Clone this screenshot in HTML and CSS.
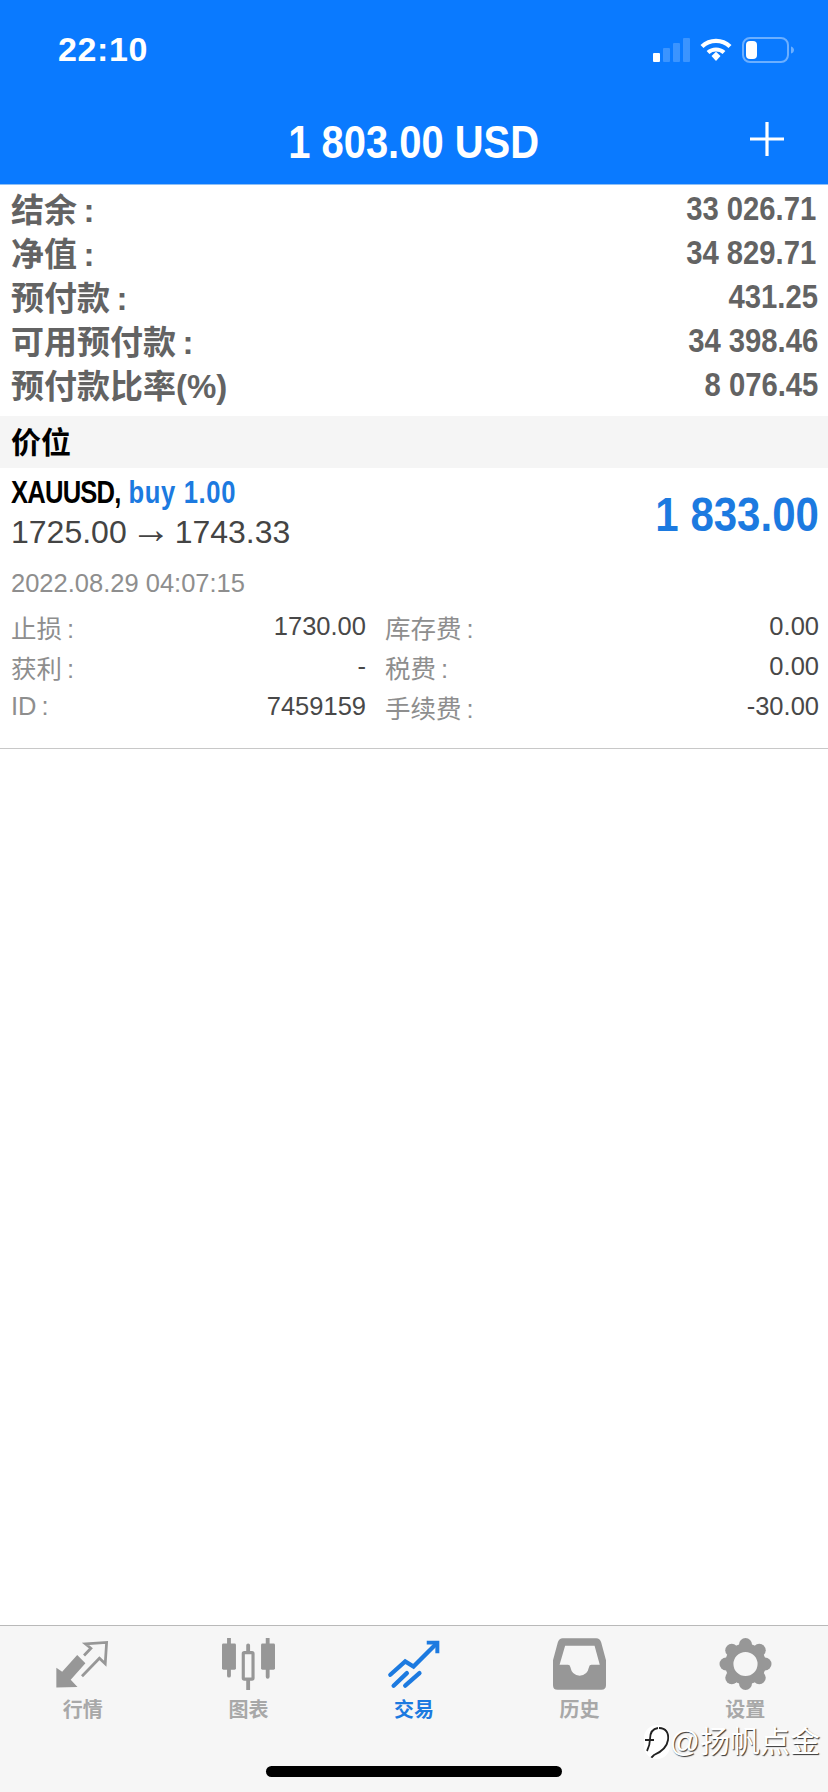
FILE: index.html
```html
<!DOCTYPE html>
<html lang="zh">
<head>
    <meta charset="UTF-8">
    <title>交易</title>
    <meta name="viewport" content="width=device-width, initial-scale=1.0">
    <link rel="stylesheet" href="styles.css">
</head>
<body>
    <div class="app">
        <header class="top">
            <div class="status">
                <span class="clock">22:10</span>
                <div class="status-icons">
                    <svg width="37" height="24" viewBox="0 0 37 24">
                        <rect x="0" y="15" width="7" height="9" rx="1" fill="#fff"/>
                        <rect x="10" y="10" width="7" height="14" rx="1" fill="#fff" opacity=".2"/>
                        <rect x="20" y="5" width="7" height="19" rx="1" fill="#fff" opacity=".2"/>
                        <rect x="30" y="0" width="7" height="24" rx="1" fill="#fff" opacity=".2"/>
                    </svg>
                    <svg width="32" height="24" viewBox="0 0 32 24">
                        <path d="M2 8.500C10 1 22 1 30 8.500" fill="none" stroke="#fff" stroke-width="4.400"/>
                        <path d="M8 14.500C12.500 10.500 19.500 10.500 24 14.500" fill="none" stroke="#fff" stroke-width="4.200"/>
                        <path d="M11.500 18L16 13.800L20.500 18L16 23Z" fill="#fff"/>
                    </svg>
                    <svg width="53" height="26" viewBox="0 0 53 26">
                        <rect x="1" y="1" width="45" height="24" rx="7" fill="none" stroke="#fff" stroke-opacity=".4" stroke-width="2"/>
                        <rect x="4" y="4" width="11" height="18" rx="4" fill="#fff"/>
                        <path d="M49 9.500C51 10 52 11.500 52 13C52 14.500 51 16 49 16.500Z" fill="#fff" opacity=".4"/>
                    </svg>
                </div>
            </div>
            <div class="title-bar">
                <span class="title">1 803.00 USD</span>
                <svg class="plus" width="36" height="36" viewBox="0 0 36 36">
                    <path d="M18 1V35M1 18H35" stroke="#fff" stroke-width="3.200"/>
                </svg>
            </div>
        </header>

        <section class="summary">
            <div class="summary-row"><span>结余&#8201;:</span><span class="nudge">33 026.71</span></div>
            <div class="summary-row"><span>净值&#8201;:</span><span class="nudge">34 829.71</span></div>
            <div class="summary-row"><span>预付款&#8201;:</span><span>431.25</span></div>
            <div class="summary-row"><span>可用预付款&#8201;:</span><span>34 398.46</span></div>
            <div class="summary-row"><span>预付款比率(%)</span><span>8 076.45</span></div>
        </section>

        <div class="section-head">价位</div>

        <section class="position">
            <div class="pos-top">
                <div>
                    <div class="pos-symbol">XAUUSD, <span class="blue">buy 1.00</span></div>
                    <div class="pos-prices"><span>1725.00</span><span class="arrow">→</span><span>1743.33</span></div>
                </div>
                <div class="pos-profit blue">1 833.00</div>
            </div>
            <div class="pos-date">2022.08.29 04:07:15</div>
            <div class="pos-grid">
                <div class="cell"><span class="cell-label">止损&#8201;:</span><span>1730.00</span></div>
                <div class="cell"><span class="cell-label">库存费&#8201;:</span><span>0.00</span></div>
                <div class="cell"><span class="cell-label">获利&#8201;:</span><span>-</span></div>
                <div class="cell"><span class="cell-label">税费&#8201;:</span><span>0.00</span></div>
                <div class="cell"><span class="cell-label">ID&#8201;:</span><span>7459159</span></div>
                <div class="cell"><span class="cell-label">手续费&#8201;:</span><span>-30.00</span></div>
            </div>
        </section>

        <div class="spacer"></div>

        <nav class="tabs">
            <div class="tab">
                <svg viewBox="170 90 155 138">
                    <path d="M171 228L171 170L188 182L232 133L256 157L213 205L233 226Z" fill="#979797"/>
                    <path d="M252 134L272 113L256 100L318 96L314 158L297 142L246 195" fill="none" stroke="#979797" stroke-width="8"/>
                </svg>
                <span>行情</span>
            </div>
            <div class="tab">
                <svg viewBox="670 85 152 147">
                    <path d="M690 85V192M801 85V195M745 105V232" stroke="#979797" stroke-width="11" stroke-linecap="round" fill="none"/>
                    <rect x="670" y="100" width="40" height="75" rx="4" fill="#979797"/>
                    <rect x="782" y="100" width="40" height="75" rx="4" fill="#979797"/>
                    <rect x="731" y="126" width="28" height="76" rx="3" fill="#f6f6f6" stroke="#979797" stroke-width="9"/>
                </svg>
                <span>图表</span>
            </div>
            <div class="tab active">
                <svg viewBox="50 40 160 145">
                    <g fill="none" stroke="#1c7ae0" stroke-width="13" stroke-linecap="round">
                        <path d="M60 145L105 105L130 120L195 55"/>
                        <path d="M70 178L110 140"/>
                        <path d="M105 178L148 140"/>
                    </g>
                    <path d="M170 42H208V80L196 80V54H170Z" fill="#1c7ae0"/>
                </svg>
                <span>交易</span>
            </div>
            <div class="tab">
                <svg viewBox="417 87 153 148">
                    <path d="M445 87H542Q552 87 556 98L570 150V222Q570 235 557 235H430Q417 235 417 222V150L431 98Q435 87 445 87ZM452 108L436 163H460Q466 163 467 170Q472 195 494 195Q516 195 521 170Q522 163 528 163H552L537 108Z" fill="#979797" fill-rule="evenodd"/>
                </svg>
                <span>历史</span>
            </div>
            <div class="tab">
                <svg viewBox="0 0 56 56">
                    <circle cx="28" cy="28" r="17.500" fill="none" stroke="#979797" stroke-width="9"/>
                    <g fill="#979797">
                        <circle cx="28" cy="7" r="7"/>
                        <circle cx="28" cy="49" r="7"/>
                        <circle cx="7" cy="28" r="7"/>
                        <circle cx="49" cy="28" r="7"/>
                        <circle cx="13.200" cy="13.200" r="7"/>
                        <circle cx="42.800" cy="13.200" r="7"/>
                        <circle cx="13.200" cy="42.800" r="7"/>
                        <circle cx="42.800" cy="42.800" r="7"/>
                    </g>
                </svg>
                <span>设置</span>
            </div>
            <div class="watermark">
                <svg class="wm-logo" width="26" height="34" viewBox="0 0 26 34">
                    <path d="M14 3C7 4 6 9 6 14C6 18 5 22 3 26M1 15H10M15 3C22 3 25 8 24 15C23 22 17 27 10 30C9 31 8 32 7 33" fill="none" stroke="#222" stroke-width="1.800"/>
                </svg>
                <span>@扬帆点金</span>
            </div>
            <div class="home-bar"></div>
        </nav>
    </div>
</body>
</html>
```

FILE: styles.css
```css
* {
    box-sizing: border-box;
}
body {
    margin: 0;
    background: #fff;
    font-family: "Liberation Sans", "Noto Sans CJK SC", sans-serif;
}
.app {
    width: 828px;
    height: 1792px;
    display: flex;
    flex-direction: column;
    overflow: hidden;
}
.blue {
    color: #1c7ae0;
}

/* top blue area */
.top {
    height: 185px;
    background: #0a7aff;
    color: #fff;
    flex-shrink: 0;
    border-bottom: 1px solid #8fc0f5;
}
.status {
    height: 96px;
    padding: 30px 33px 0 58px;
    display: flex;
    justify-content: space-between;
    align-items: flex-start;
}
.clock {
    font-size: 34px;
    font-weight: bold;
    line-height: 38px;
    letter-spacing: 0.6px;
}
.status-icons {
    display: flex;
    align-items: center;
    gap: 10px;
    padding-top: 7px;
}
.title-bar {
    height: 88px;
    display: flex;
    justify-content: center;
    align-items: center;
    position: relative;
}
.title {
    font-size: 47px;
    font-weight: bold;
    transform: scaleX(0.85);
    padding-top: 3px;
}
.plus {
    position: absolute;
    right: 43px;
    top: 25px;
}

/* account rows */
.summary {
    padding: 1px 10px 10px 11px;
    flex-shrink: 0;
}
.summary-row {
    height: 44px;
    display: flex;
    justify-content: space-between;
    align-items: center;
    font-size: 33px;
    font-weight: bold;
    color: #636363;
}
.summary-row span:last-child {
    font-size: 34px;
    transform: scaleX(0.86);
    transform-origin: right center;
}
.summary-row .nudge {
    margin-right: 2px;
}
.section-head {
    height: 52px;
    flex-shrink: 0;
    background: #f5f5f5;
    padding: 0 0 4px 11px;
    display: flex;
    align-items: center;
    font-size: 30px;
    font-weight: bold;
    color: #000;
}

/* open position */
.position {
    padding: 4px 9px 0 11px;
    height: 281px;
    flex-shrink: 0;
    border-bottom: 1px solid #c8c8c8;
}
.pos-top {
    display: flex;
    justify-content: space-between;
    align-items: center;
}
.pos-symbol {
    font-size: 32px;
    font-weight: bold;
    color: #000;
    line-height: 40px;
    letter-spacing: -1px;
    transform: scaleX(0.8);
    transform-origin: left center;
    white-space: nowrap;
}
.pos-symbol .blue {
    letter-spacing: 0.8px;
    margin-left: 2px;
}
.pos-prices {
    font-size: 32px;
    color: #444;
    line-height: 40px;
}
.arrow {
    font-size: 40px;
    line-height: 0;
    margin: 0 4px;
}
.pos-profit {
    font-size: 48px;
    font-weight: bold;
    margin-top: 5px;
    transform: scaleX(0.875);
    transform-origin: right center;
}
.pos-date {
    font-size: 25.500px;
    color: #8e8e8e;
    line-height: 30px;
    margin-top: 16px;
    margin-bottom: 8px;
}
.pos-grid {
    display: grid;
    grid-template-columns: 355px 1fr;
    column-gap: 19px;
}
.cell {
    height: 40px;
    display: flex;
    justify-content: space-between;
    align-items: center;
    font-size: 25.500px;
    color: #484848;
}
.cell-label {
    color: #8e8e8e;
}

.spacer {
    flex: 1;
}

/* bottom tabs */
.tabs {
    height: 167px;
    flex-shrink: 0;
    background: #f6f6f6;
    border-top: 1px solid #b9b9b9;
    display: grid;
    grid-template-columns: repeat(5, 165.600px);
    position: relative;
}
.tab {
    display: flex;
    flex-direction: column;
    align-items: center;
    padding-top: 12px;
    gap: 7px;
    font-size: 20px;
    line-height: 26px;
    font-weight: bold;
    color: #a8a8a8;
}
.tab svg {
    width: 53px;
    height: 52px;
}
.tab.active {
    color: #1c7ae0;
}
.watermark {
    position: absolute;
    right: 8px;
    top: 96px;
    display: flex;
    align-items: center;
    font-size: 30px;
    line-height: 40px;
    color: #fff;
    text-shadow: 1px 1px 1px #333;
}
.wm-logo {
    background: #fff;
    border-radius: 13px;
}
.home-bar {
    position: absolute;
    left: 266px;
    top: 140px;
    width: 296px;
    height: 11px;
    border-radius: 6px;
    background: #000;
}
```
